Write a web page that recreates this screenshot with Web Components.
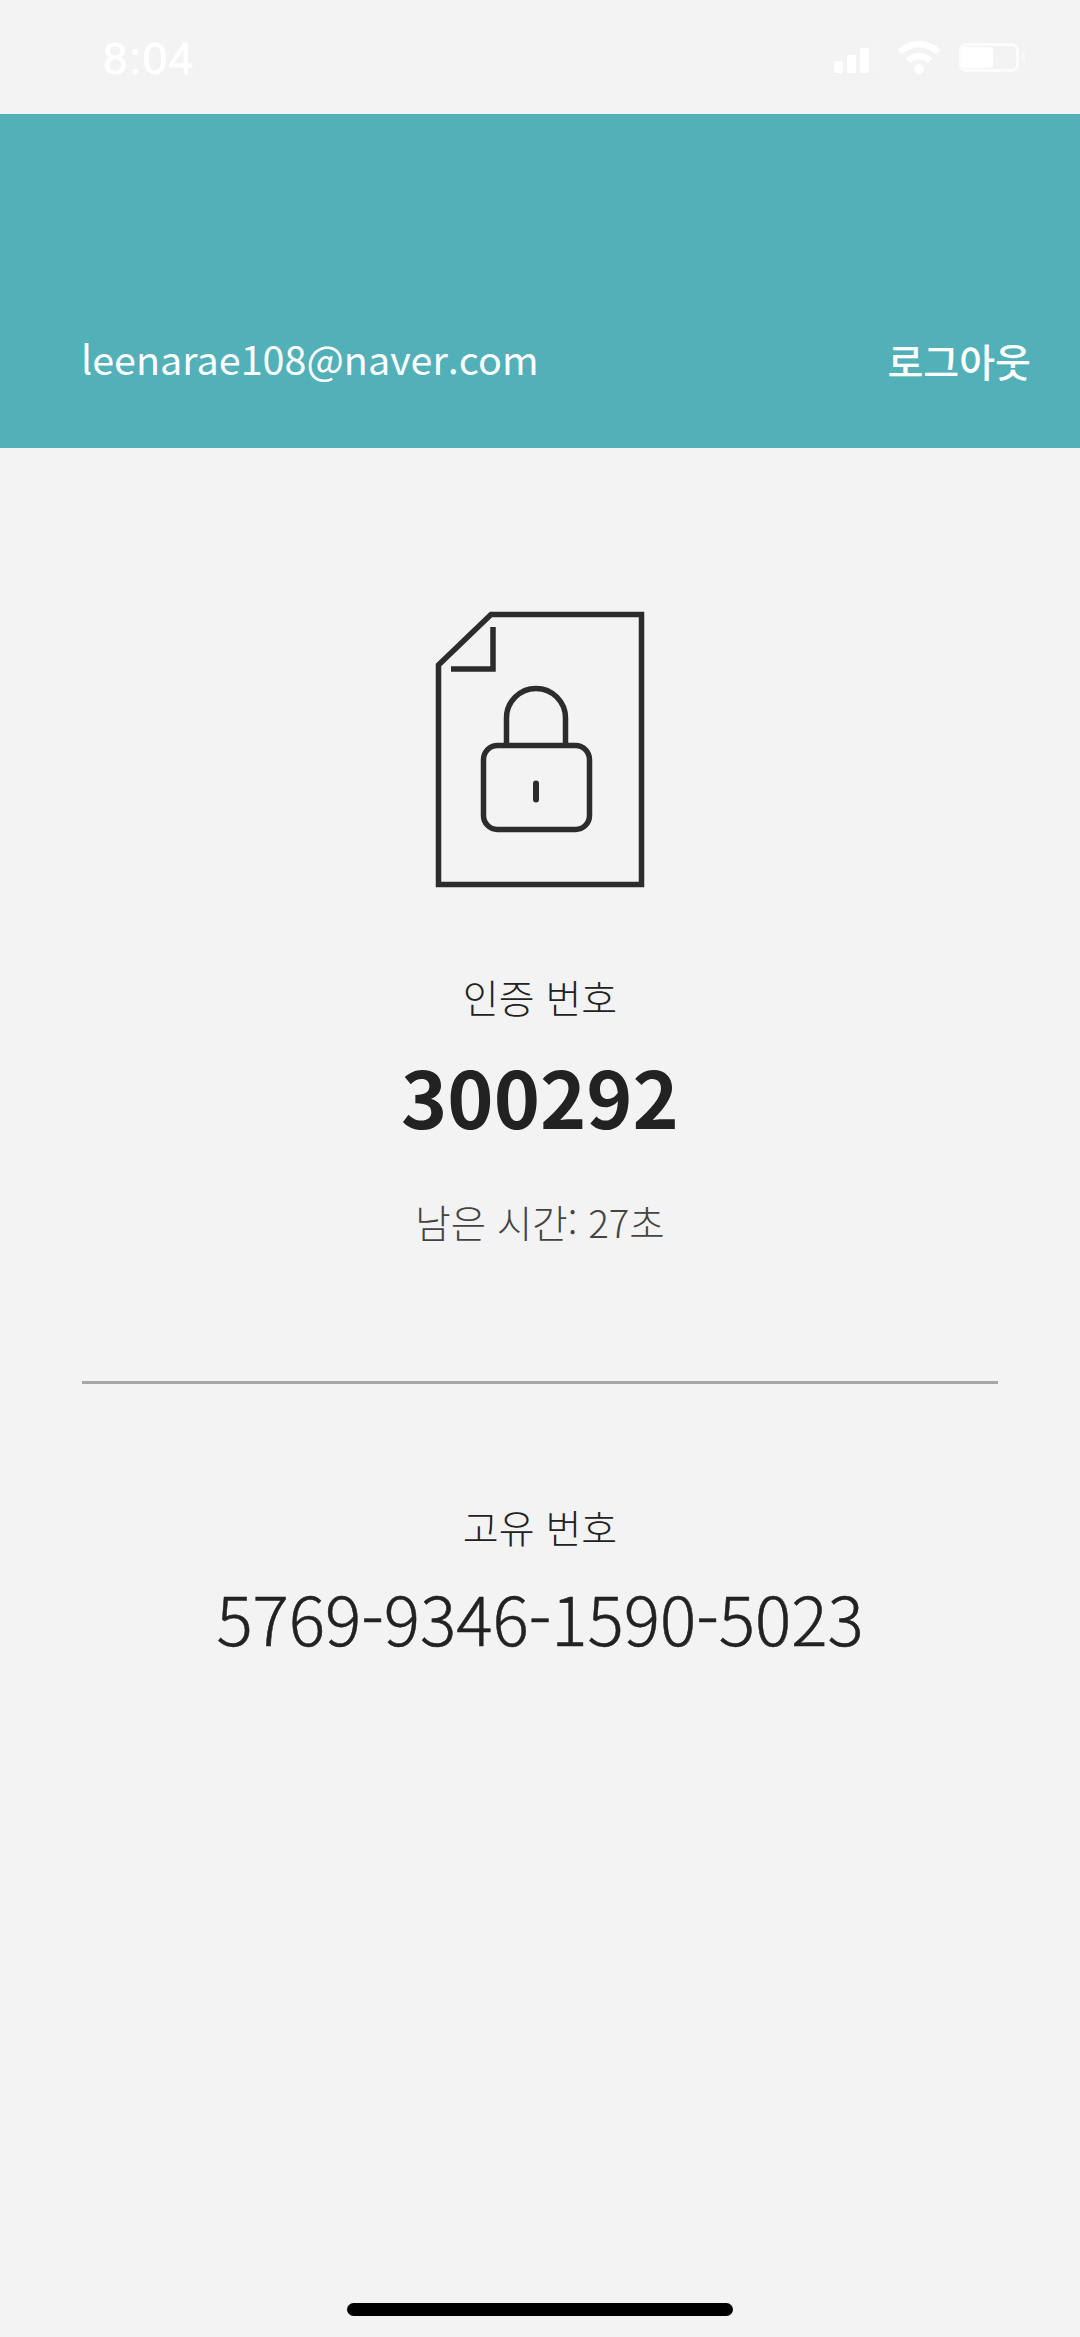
<!DOCTYPE html>
<html lang="ko">
<head>
<meta charset="utf-8">
<title>인증 번호</title>
<style>
    html, body { margin: 0; height: 100%; background: #f3f3f3; }
    body {
        font-family: "Noto Sans CJK KR", "Noto Sans", sans-serif;
        color: #222;
    }
</style>
</head>
<body>
<app-screen>
    <status-bar time="8:04"></status-bar>
    <account-header email="leenarae108@naver.com" action="로그아웃"></account-header>
    <otp-panel code="300292" remaining="남은 시간: 27초"></otp-panel>
    <serial-panel serial="5769-9346-1590-5023"></serial-panel>
    <home-bar></home-bar>
</app-screen>

<script>
class AppScreen extends HTMLElement {
    constructor() {
        super();
        this.attachShadow({ mode: 'open' });
        this.shadowRoot.innerHTML = `
            <style>
                :host {
                    display: flex;
                    flex-direction: column;
                    height: 2337px;
                    overflow: hidden;
                    background: #f3f3f3;
                }
            </style>
            <slot></slot>
        `;
    }
}

class StatusBar extends HTMLElement {
    constructor() {
        super();
        this.attachShadow({ mode: 'open' });
    }

    connectedCallback() {
        this.shadowRoot.innerHTML = `
            <style>
                :host {
                    display: flex;
                    justify-content: space-between;
                    align-items: flex-start;
                    height: 114px;
                    padding: 0 26px 0 103px;
                    box-sizing: border-box;
                    color: #fff;
                }
                .time {
                    margin-top: 33px;
                    font: 400 44px/52px "Liberation Sans", sans-serif;
                    letter-spacing: 1.500px;
                    -webkit-text-stroke: .8px #fff;
                    filter: blur(.6px);
                }
                .icons {
                    display: flex;
                    align-items: flex-start;
                    margin-top: 40px;
                    filter: blur(.6px);
                }
                svg { display: block; }
            </style>
            <div class="time">${this.getAttribute('time')}</div>
            <div class="icons">
                <svg width="220" height="36" viewBox="0 0 220 36" fill="#fff">
                    <rect x="0" y="21" width="9" height="12" rx="1.500"/>
                    <rect x="13" y="15" width="9" height="18" rx="1.500"/>
                    <rect x="26" y="8" width="9" height="25" rx="1.500"/>
                    <rect x="39" y="3" width="8" height="30" rx="1.500" opacity=".15"/>
                    <path d="M66 12 A27 27 0 0 1 104 12" fill="none" stroke="#fff" stroke-width="6.500"/>
                    <path d="M74 21 A15 15 0 0 1 96 21" fill="none" stroke="#fff" stroke-width="6.500"/>
                    <circle cx="85" cy="29" r="5"/>
                    <rect x="126.500" y="4.500" width="57" height="26" rx="6" fill="none" stroke="#fff" stroke-width="3" opacity=".7"/>
                    <rect x="128" y="7" width="31" height="21" rx="3"/>
                    <rect x="188" y="12" width="3" height="10" rx="1.500" opacity=".5"/>
                </svg>
            </div>
        `;
    }
}

class AccountHeader extends HTMLElement {
    constructor() {
        super();
        this.attachShadow({ mode: 'open' });
    }

    connectedCallback() {
        this.shadowRoot.innerHTML = `
            <style>
                :host {
                    display: flex;
                    justify-content: space-between;
                    align-items: flex-end;
                    height: 334px;
                    padding: 0 49px 60px 81px;
                    box-sizing: border-box;
                    background: #52b0b8;
                    color: #fff;
                }
                .email { font-size: 39.500px; line-height: 60px; }
                .action { font-size: 39px; line-height: 56px; font-weight: 500; }
            </style>
            <div class="email">${this.getAttribute('email')}</div>
            <div class="action">${this.getAttribute('action')}</div>
        `;
    }
}

class OtpPanel extends HTMLElement {
    constructor() {
        super();
        this.attachShadow({ mode: 'open' });
    }

    connectedCallback() {
        this.shadowRoot.innerHTML = `
            <style>
                :host {
                    display: flex;
                    flex-direction: column;
                    align-items: center;
                    margin: 0 82px;
                    padding: 162px 0 0;
                    height: 936px;
                    box-sizing: border-box;
                    border-bottom: 3px solid #a6a6a6;
                    text-align: center;
                }
                svg { display: block; margin-bottom: 80px; }
                .label { font-size: 39px; line-height: 56px; font-weight: 300; color: #222; }
                .code { font-size: 78.500px; line-height: 116px; font-weight: 700; margin-top: 13px; color: #222; }
                .remaining { font-size: 38.500px; line-height: 56px; font-weight: 300; margin-top: 40px; color: #444; }
            </style>
            <svg width="210" height="278" viewBox="0 0 210 278" fill="none" stroke="#2c2c2c" stroke-width="5.500">
                <path d="M56 4.500H206.500V274.500H3.500V55Z"/>
                <path d="M16 59H58V17"/>
                <g stroke-linecap="round">
                    <path d="M71.500 135V108a29.500 29.500 0 0 1 59 0V135"/>
                    <rect x="48.500" y="135.500" width="106" height="84" rx="14"/>
                    <path d="M101 173.500V189.500" stroke-width="6"/>
                </g>
            </svg>
            <div class="label">인증 번호</div>
            <div class="code">${this.getAttribute('code')}</div>
            <div class="remaining">${this.getAttribute('remaining')}</div>
        `;
    }
}

class SerialPanel extends HTMLElement {
    constructor() {
        super();
        this.attachShadow({ mode: 'open' });
    }

    connectedCallback() {
        this.shadowRoot.innerHTML = `
            <style>
                :host {
                    display: flex;
                    flex-direction: column;
                    align-items: center;
                    padding-top: 114px;
                    flex: 1;
                    text-align: center;
                }
                .label { font-size: 39px; line-height: 56px; font-weight: 300; }
                .serial {
                    font-size: 67.700px;
                    line-height: 96px;
                    font-weight: 300;
                    margin-top: 14px;
                    -webkit-text-stroke: .5px #222;
                }
            </style>
            <div class="label">고유 번호</div>
            <div class="serial">${this.getAttribute('serial')}</div>
        `;
    }
}

class HomeBar extends HTMLElement {
    constructor() {
        super();
        this.attachShadow({ mode: 'open' });
        this.shadowRoot.innerHTML = `
            <style>
                :host {
                    display: flex;
                    justify-content: center;
                    padding-bottom: 21px;
                }
                .bar { width: 386px; height: 13px; border-radius: 7px; background: #000; }
            </style>
            <div class="bar"></div>
        `;
    }
}

customElements.define('app-screen', AppScreen);
customElements.define('status-bar', StatusBar);
customElements.define('account-header', AccountHeader);
customElements.define('otp-panel', OtpPanel);
customElements.define('serial-panel', SerialPanel);
customElements.define('home-bar', HomeBar);
</script>
</body>
</html>
